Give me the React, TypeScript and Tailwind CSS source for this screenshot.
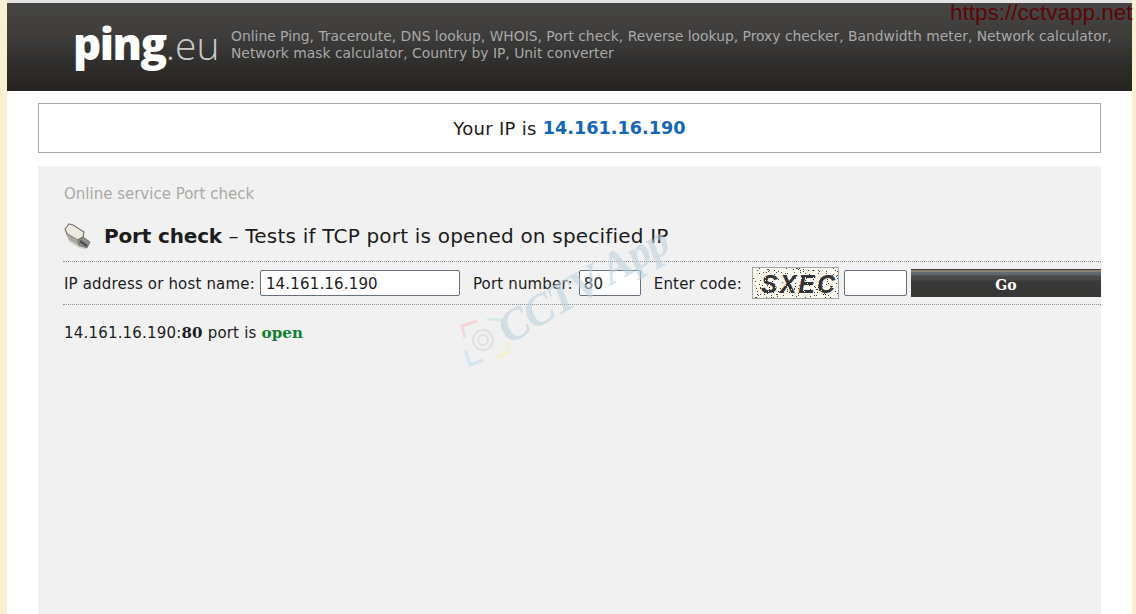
import React from 'react';

const font = { fontFamily: '"DejaVu Sans", Verdana, sans-serif' };
const logoFont = { fontFamily: '"Open Sans", sans-serif' };
const serif = { fontFamily: '"DejaVu Serif", serif' };

// deterministic noise for the captcha
const dots = Array.from({ length: 280 }, (_, i) => ({
  x: (i * 37 + (i * i) % 23) % 86,
  y: (i * 53 + (i * i) % 17) % 30,
}));

const PlugIcon = () => (
  <svg width="28" height="28" viewBox="0 0 28 28" className="shrink-0">
    <path d="M2 7 L6 2 L10 3 L21 10 L20 15 L15 18 L4 12 Z" fill="#eceade" stroke="#77766e" strokeWidth="1.2" />
    <path d="M3 12 L15 18 L16 24 L6 18 Z" fill="#a9a89f" />
    <path d="M15 18 L20 15 L27 20 L24 26 L16 24 Z" fill="#8b8d8c" stroke="#66675f" strokeWidth="0.8" />
    <path d="M17 19 L24 24" stroke="#4b4f52" strokeWidth="2.4" />
    <path d="M6 19 L16 25 L23 27" stroke="#d6d3c6" strokeWidth="1.5" fill="none" />
  </svg>
);

const Captcha = () => (
  <div className="w-[87px] h-[32px] border border-[#a8a8a8] bg-[#fdfaf0] overflow-hidden shrink-0 ml-[10px]">
    <svg width="85" height="30" viewBox="0 0 85 30">
      <text x="8" y="25" fontSize="25" fontWeight="700" fontStyle="italic" fill="#333" letterSpacing="2" fontFamily='"Liberation Sans", sans-serif'>
        SXEC
      </text>
      {dots.map((d, i) => (
        <rect key={i} x={d.x} y={d.y} width="1" height="1" fill={i % 3 === 0 ? '#fdfaf0' : '#3f3f3f'} />
      ))}
    </svg>
  </div>
);

const App: React.FC = () => {
  return (
    <div className="relative h-[614px] w-[1136px] overflow-hidden bg-[#f9f0d2] pl-[7px] pr-[4px] text-[#1c1c1c]" style={font}>
      <div className="h-full bg-white">
        <div className="h-[3px] bg-[#e4e4e4]" />
        {/* Header */}
        <div className="h-[88px] flex items-start bg-[image:repeating-conic-gradient(rgba(0,0,0,0.09)_0_25%,transparent_0_50%),linear-gradient(#4a4948,#403f3e_40%,#2e2d2b_75%,#272624)] bg-[size:2px_2px,100%_100%]">
          <div className="ml-[66px] mt-[12px] w-[158px] shrink-0 flex items-baseline text-white">
            <span className="text-[44px] leading-[56px] font-extrabold tracking-[-1.5px]" style={logoFont}>ping</span>
            <span className="text-[#c9c9c9] text-[39px] leading-[56px] font-light" style={logoFont}>.eu</span>
          </div>
          <p className="mt-[25px] w-[895px] text-[13.87px] leading-[17px] text-[#a8a8a8]">
            Online Ping, Traceroute, DNS lookup, WHOIS, Port check, Reverse lookup, Proxy checker, Bandwidth meter, Network calculator, Network mask calculator, Country by IP, Unit converter
          </p>
        </div>

        <div className="ml-[31px] w-[1063px]">
          <div className="mt-[12px] h-[50px] border border-[#a9a9a9] flex items-center justify-center pt-[1px] text-[18px]">
            <span className="tracking-[0.3px]">Your IP is</span>
            <b className="ml-[6px] text-[17.65px] text-[#1467b8]">14.161.16.190</b>
          </div>

          <div className="mt-[13px] h-[448px] bg-[#f1f1f1] pl-[25px] pt-[18px]">
            <div className="ml-[1px] text-[15px] leading-[20px] text-[#a9aaa5]">Online service Port check</div>

            <div className="mt-[14px] flex items-center h-[36px]">
              <PlugIcon />
              <h1 className="ml-[13px] text-[20px] leading-[28px] tracking-[0.2px]">
                <b className="tracking-[-0.16px]">Port check</b> – Tests if TCP port is opened on specified IP
              </h1>
            </div>

            <div className="mt-[7px] h-[44px] border-y border-dotted border-[#8e8e8e] flex items-center text-[15px] tracking-[0.17px]">
              <span className="ml-[1px] pt-[3px]">IP address or host name:</span>
              <input readOnly value="14.161.16.190" className="ml-[5px] w-[200px] h-[26px] bg-white border border-[#66717d] rounded-[2px] px-[5px] pt-[1px] text-[15px] tracking-[0.17px] outline-none" />
              <span className="ml-[13px] pt-[3px]">Port number:</span>
              <input readOnly value="80" className="ml-[6px] w-[62px] h-[26px] bg-white border border-[#66717d] rounded-[2px] px-[4px] pt-[1px] text-[15px] outline-none" />
              <span className="ml-[13px] pt-[3px]">Enter code:</span>
              <Captcha />
              <input readOnly value="" className="ml-[5px] w-[63px] h-[26px] bg-white border border-[#66717d] rounded-[2px] outline-none" />
              <button className="ml-[4px] flex-1 h-[28px] bg-[linear-gradient(#3a3a3a_0,#3a3a3a_1px,#8a8270_1px,#8a8270_3px,#66707a_3px,#5c6268_6px,#4a4a4a_7px,#474747_11px,#383837_12px,#373736)] text-white text-[14px] font-bold pt-[4px]" style={serif}>
                Go
              </button>
            </div>

            <p className="mt-[18px] ml-[1px] text-[15px] leading-[20px] tracking-[0.19px]">
              14.161.16.190:<b style={serif}>80</b> port is <b className="text-[#0f7f32]" style={serif}>open</b>
            </p>
          </div>
        </div>
      </div>

      {/* cctvapp watermarks */}
      <div className="absolute left-[950px] top-0 text-[22.5px] leading-[25px] text-[#5c0707]" style={{ fontFamily: '"Liberation Sans", sans-serif' }}>
        https://cctvapp.net
      </div>
      <div className="absolute left-[457px] top-[318px] opacity-60">
        <svg width="54" height="50" viewBox="0 0 54 50" fill="none" strokeWidth="3">
          <path d="M20 3 L5 8 L8 20" stroke="#f4c9c9" />
          <path d="M30 1 L44 2 L46 12" stroke="#c9e8d5" />
          <path d="M8 32 L13 47 L26 42" stroke="#bfe1f2" />
          <path d="M50 24 L52 34 L40 39" stroke="#f6efbd" />
          <circle cx="26" cy="22" r="10" stroke="#d9d5d5" strokeWidth="2" />
          <circle cx="26" cy="22" r="5" stroke="#d9d5d5" strokeWidth="2" />
        </svg>
      </div>
      <div className="absolute left-[514px] top-[304px] -rotate-[30deg] origin-bottom-left text-[44px] leading-[50px] tracking-[-1px] italic font-bold text-[#bcd3df] opacity-60 whitespace-nowrap" style={{ fontFamily: '"Liberation Serif", serif' }}>
        CCTV App
      </div>
    </div>
  );
};

export default App;
